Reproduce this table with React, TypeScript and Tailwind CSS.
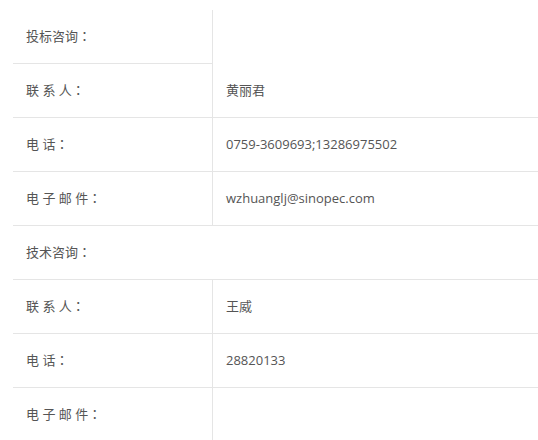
const font = { fontFamily: '"Open Sans", "Noto Sans CJK SC", sans-serif' };

type Row = { label: string; value?: string; full?: boolean };

const rows: Row[] = [
  { label: "电 话", value: "0759-3609693;13286975502" },
  { label: "电 子 邮 件", value: "wzhuanglj@sinopec.com" },
  { label: "技术咨询", full: true },
  { label: "联 系 人", value: "王威" },
  { label: "电 话", value: "28820133" },
  { label: "电 子 邮 件", value: "" },
];

// the full-width colon sits centred in its box in the reference
const Label = ({ text }: { text: string }) => (
  <span>
    {text}
    <span style={{ fontFamily: '"Noto Sans CJK JP", sans-serif' }}>：</span>
  </span>
);

const App = () => {
  return (
    <div className="bg-white w-[538px] h-[440px] overflow-hidden">
      <div
        className="ml-[13px] mt-[10px] text-[13px] text-[#555]"
        style={font}
      >
        {/* first group: the right cell spans both rows */}
        <div className="flex border-b border-[#e5e5e5]">
          <div className="w-[200px] border-r border-[#e5e5e5]">
            <div className="h-[54px] flex items-center pl-[13px] border-b border-[#e5e5e5]">
              <Label text="投标咨询" />
            </div>
            <div className="h-[53px] flex items-center pl-[13px]">
              <Label text="联 系 人" />
            </div>
          </div>
          <div className="flex-1 flex items-end">
            <div className="h-[53px] flex items-center pl-[13px]">黄丽君</div>
          </div>
        </div>
        {rows.map((row, i) =>
          row.full ? (
            <div
              key={i}
              className="h-[54px] flex items-center pl-[13px] border-b border-[#e5e5e5]"
            >
              <Label text={row.label} />
            </div>
          ) : (
            <div key={i} className="h-[54px] flex border-b border-[#e5e5e5]">
              <div className="w-[200px] flex items-center pl-[13px] border-r border-[#e5e5e5]">
                <Label text={row.label} />
              </div>
              <div className="flex-1 flex items-center pl-[13px]">{row.value}</div>
            </div>
          )
        )}
      </div>
    </div>
  );
};

export default App;
